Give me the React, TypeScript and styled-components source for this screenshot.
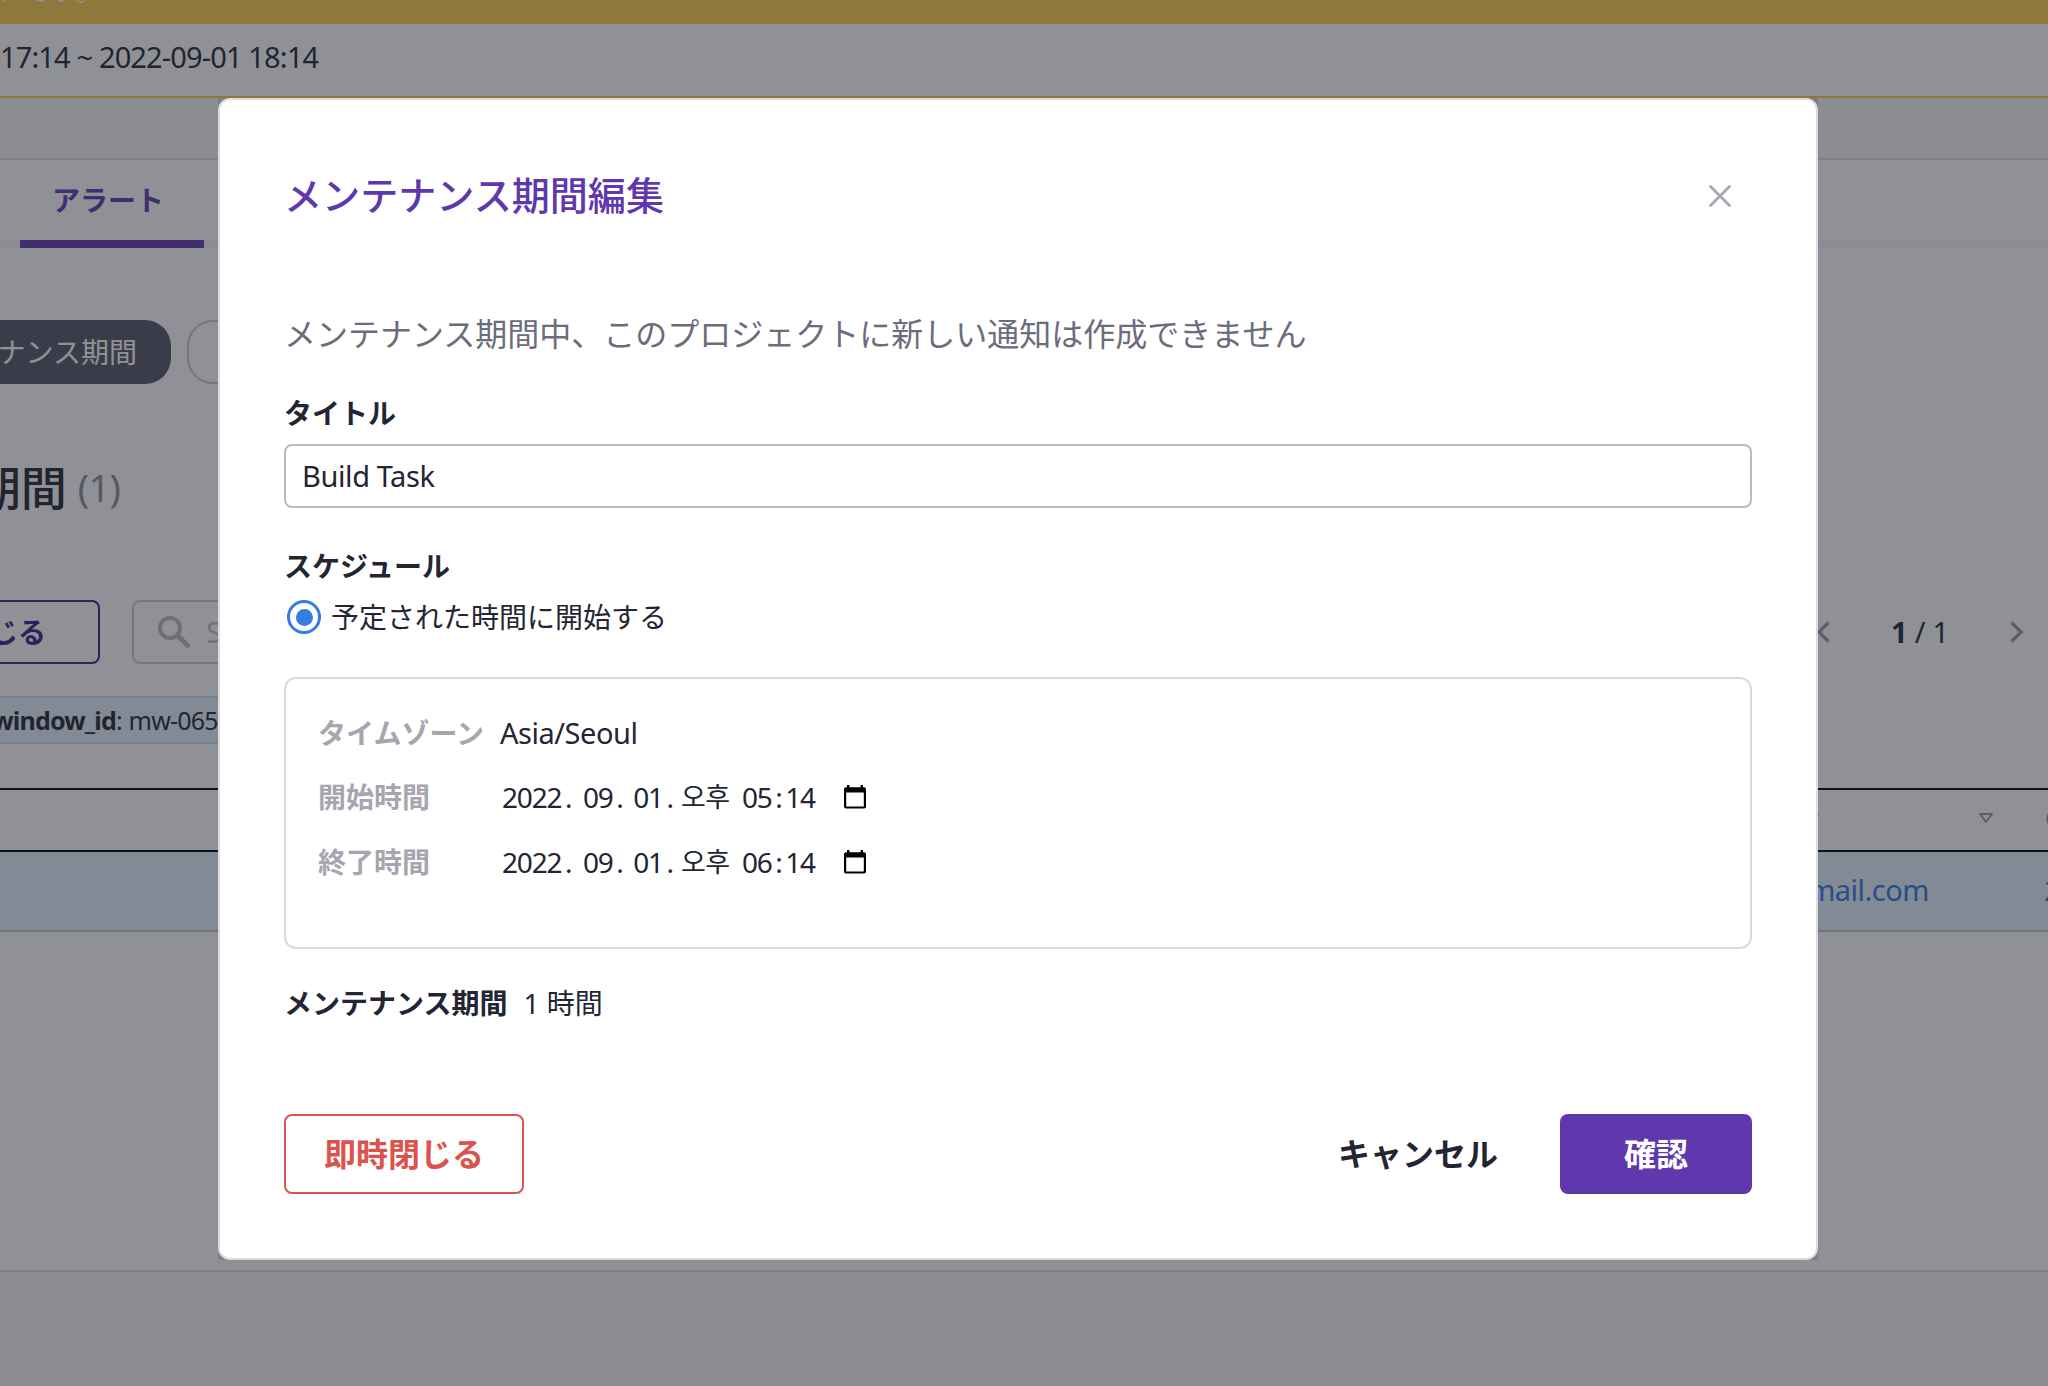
import React from "react";
import styled, { createGlobalStyle, css } from "styled-components";

const GlobalStyle = createGlobalStyle`
  *, *::before, *::after { box-sizing: border-box; }
  body {
    margin: 0;
    overflow: hidden;
    font-family: "Noto Sans", "Noto Sans CJK JP", "Noto Sans CJK KR", sans-serif;
    font-size: 28px;
    line-height: 40px;
    color: #232533;
  }
  button, input { font: inherit; color: inherit; }
`;

const Screen = styled.div`
  position: relative;
  width: 2048px;
  height: 1386px;
  overflow: hidden;
  background: #f7f7f8;
`;

const Page = styled.div`
  display: flex;
  flex-direction: column;
  height: 100%;
  white-space: nowrap;
`;

const Latin = styled.span`
  font-size: 29px;
  letter-spacing: -0.48px;
`;

const Banner = styled.div`
  display: flex;
  align-items: flex-end;
  height: 24px;
  padding-bottom: 14px;
  background: #f9cf49;
  color: #fff;
  overflow: hidden;
`;

const BannerText = styled.span`
  margin-left: -6px;
`;

const Notice = styled.div`
  display: flex;
  align-items: center;
  height: 74px;
  padding-bottom: 6px;
  background: #fff;
  border-bottom: 2px solid #f9cf49;
  font-size: 29px;
  letter-spacing: -0.86px;
`;

const Card = styled.main`
  display: flex;
  flex-direction: column;
  height: 1114px;
  margin-top: 60px;
  background: #fff;
  border-top: 2px solid #dcdce0;
  border-bottom: 2px solid #dcdce0;
`;

const Tabs = styled.nav`
  display: flex;
  height: 88px;
  padding-left: 20px;
  border-bottom: 8px solid #f5f5f8;
`;

const Tab = styled.a`
  display: flex;
  justify-content: center;
  width: 184px;
  height: 88px;
  padding: 20px 8px 0 0;
  border-bottom: 8px solid #6038ae;
  color: #6038ae;
  font-weight: 700;
`;

const Pills = styled.div`
  display: flex;
  gap: 16px;
  margin-top: 72px;
`;

const Pill = styled.span<{ $active?: boolean }>`
  display: flex;
  align-items: center;
  justify-content: flex-end;
  width: 171px;
  height: 64px;
  padding: 0 34px 0 0;
  border: 2px solid #c8c8ce;
  border-radius: 26px;
  overflow: hidden;
  ${(p) =>
    p.$active &&
    css`
      border: 0;
      border-radius: 0 26px 26px 0;
      background: #535566;
      color: #fff;
    `}
`;

const Heading = styled.h2`
  display: flex;
  align-items: center;
  justify-content: flex-end;
  gap: 11px;
  width: 120px;
  height: 60px;
  margin: 73px 0 0;
  font-size: 46px;
  font-weight: 500;
`;

const Count = styled.span`
  font-size: 38px;
  font-weight: 400;
  letter-spacing: -0.8px;
  color: #8b8c9c;
`;

const Toolbar = styled.div`
  display: flex;
  align-items: center;
  margin-top: 83px;
  height: 64px;
`;

const OutlineButton = styled.button`
  display: flex;
  align-items: center;
  justify-content: flex-end;
  width: 100px;
  height: 64px;
  padding: 0 52px 0 0;
  border: 2px solid #3e1c86;
  border-left: 0;
  border-radius: 0 8px 8px 0;
  background: transparent;
  color: #3e1c86;
  font-weight: 700;
  overflow: hidden;
`;

const Search = styled.div`
  display: flex;
  align-items: center;
  gap: 15px;
  width: 700px;
  height: 64px;
  margin-left: 32px;
  padding-left: 23px;
  border: 2px solid #c8c8ce;
  border-radius: 8px;
  color: #c0c0c6;
`;

const Pager = styled.div`
  display: flex;
  align-items: center;
  gap: 61px;
  margin-left: auto;
  padding-right: 24px;
`;

const PageNumber = styled.span`
  font-size: 29px;
  letter-spacing: -0.2px;
`;

const QueryTag = styled.div`
  display: flex;
  align-items: center;
  width: 460px;
  height: 48px;
  margin-top: 32px;
  background: #e3f1ff;
  border: solid #bfdfff;
  border-width: 2px 2px 2px 0;
  border-radius: 0 4px 4px 0;
  font-size: 25px;
  letter-spacing: -0.8px;
`;

const QueryKey = styled.b`
  display: flex;
  justify-content: flex-end;
  width: 116px;
`;

const QueryValue = styled.span`
  word-spacing: 1px;
`;

const TableHead = styled.div`
  display: flex;
  align-items: center;
  justify-content: flex-end;
  height: 64px;
  margin-top: 44px;
  padding-bottom: 4px;
  border: solid #000;
  border-width: 2px 0;
  font-size: 26px;
  color: #8b8c9c;
`;

const HeadCell = styled.span<{ $w: number }>`
  display: flex;
  justify-content: flex-end;
  width: ${(p) => p.$w}px;
`;

const LastHeadCell = styled.span`
  width: 3px;
  margin-left: 51px;
`;

const Row = styled.div`
  display: flex;
  justify-content: flex-end;
  align-items: center;
  height: 80px;
  padding-bottom: 2px;
  background: #e3f1ff;
  border-bottom: 2px solid #bcc2cf;
  color: #2f78df;
`;

const LastCell = styled.span`
  width: 4px;
  margin-left: 115px;
`;

const Backdrop = styled.div`
  position: absolute;
  inset: 0;
  display: flex;
  align-items: flex-start;
  padding: 98px 0 0 218px;
  background: rgba(34, 36, 46, 0.5);
`;

const DialogFrame = styled.div`
  background: rgba(34, 36, 46, 0.15);
`;

const Dialog = styled.section`
  display: flex;
  flex-direction: column;
  width: 1600px;
  height: 1162px;
  padding: 64px;
  background: #fff;
  border: 2px solid #dcdce0;
  border-radius: 12px;
`;

const DialogHeader = styled.header`
  display: flex;
  align-items: center;
  justify-content: space-between;
  height: 64px;
  padding-right: 20px;
`;

const Title = styled.h1`
  margin: 0;
  padding-bottom: 3px;
  font-size: 38.1px;
  font-weight: 500;
  line-height: 56px;
  color: #6038ae;
`;

const IconButton = styled.button`
  display: flex;
  padding: 0;
  border: 0;
  background: none;
`;

const Description = styled.p`
  margin: 82px 0 0;
  font-size: 32px;
  line-height: 48px;
  color: #6b6c7c;
`;

const FieldLabel = styled.label<{ $top: number }>`
  margin-top: ${(p) => p.$top}px;
  font-weight: 700;
`;

const TextInput = styled.input`
  width: 100%;
  height: 64px;
  margin-top: 11px;
  padding: 0 16px 1px;
  border: 2px solid #b9b9c1;
  border-radius: 8px;
  outline: 0;
  && {
    font-size: 29px;
    letter-spacing: -0.4px;
  }
`;

const RadioRow = styled.div`
  display: flex;
  align-items: center;
  gap: 10px;
  margin: 11px 0 0 3px;
`;

const Radio = styled.span`
  display: flex;
  align-items: center;
  justify-content: center;
  width: 34px;
  height: 34px;
  border: 3px solid #367de0;
  border-radius: 50%;

  &::after {
    content: "";
    width: 17px;
    height: 17px;
    border-radius: 50%;
    background: #367de0;
  }
`;

const ScheduleBox = styled.div`
  display: flex;
  flex-direction: column;
  gap: 24px;
  height: 272px;
  margin-top: 40px;
  padding: 34px 32px;
  border: 2px solid #dadadd;
  border-radius: 12px;
`;

const ScheduleRow = styled.div`
  display: grid;
  grid-template-columns: 182px auto;
  align-items: center;
  height: 40px;

  &:last-child {
    margin-top: 1px;
  }
`;

const ScheduleLabel = styled.span`
  font-weight: 700;
  color: #a6a6af;
`;

const DateTime = styled.span`
  display: flex;
  align-items: center;
  padding-left: 1px;
`;

const DatePart = styled.span`
  padding: 0 1px;
  letter-spacing: -1.15px;
`;

const Meridiem = styled.span`
  margin-right: 11.5px;
  font-size: 27px;
  letter-spacing: -0.6px;
`;

const Sep = styled.span<{ $r: number }>`
  padding: 0 ${(p) => p.$r}px 0 2.5px;
  letter-spacing: -1px;
`;

const CalendarSlot = styled.span`
  display: flex;
  margin-left: 27.5px;
  padding-bottom: 1px;
`;

const Duration = styled.div`
  display: flex;
  gap: 16px;
  margin-top: 34px;
`;

const DialogFooter = styled.footer`
  display: flex;
  align-items: center;
  margin-top: 91px;
`;

const DialogButton = styled.button<{ $kind: "danger" | "plain" | "primary" }>`
  height: 80px;
  padding: 0;
  border: 0;
  border-radius: 8px;
  background: transparent;
  && {
    font-size: 32px;
    font-weight: 700;
  }
  ${(p) => p.$kind === "danger" && css`width: 240px; border: 2px solid #da534c; color: #da534c !important;`}
  ${(p) => p.$kind === "plain" && css`width: 160px; margin: 0 62px 0 auto;`}
  ${(p) => p.$kind === "primary" && css`width: 192px; background: #6038ae; color: #fff !important;`}
`;

const Chevron = ({ flip }: { flip?: boolean }) => (
  <svg width="14" height="22" viewBox="0 0 14 22" fill="none" stroke="#9b9ba8" strokeWidth="3.4" strokeLinecap="round">
    <path d={flip ? "M2.5 2.5 11 11 2.5 19.5" : "M11.5 2.5 3 11 11.5 19.5"} />
  </svg>
);

const SearchIcon = () => (
  <svg width="34" height="34" viewBox="0 0 34 34" fill="none" stroke="#b8b8c0" strokeWidth="4">
    <circle cx="13" cy="13" r="10" />
    <path d="M20.5 20.5 32 32" strokeWidth="4.6" />
  </svg>
);

const CloseIcon = () => (
  <svg width="24" height="24" viewBox="0 0 24 24" fill="none" stroke="#a6a6af" strokeWidth="2.8" strokeLinecap="round">
    <path d="M2.5 2.5 21.5 21.5M21.5 2.5 2.5 21.5" />
  </svg>
);

const SortIcon = () => (
  <svg width="16" height="12" viewBox="0 0 16 12" fill="none" stroke="#9b9ba8" strokeWidth="2" strokeLinejoin="round">
    <path d="M2 2H14L8 10Z" />
  </svg>
);

const CalendarIcon = () => (
  <svg width="24" height="26" viewBox="0 0 24 26">
    <path
      fill="#000"
      fillRule="evenodd"
      d="M4 1H6.4V3.2H17.6V1H20V3.2H21Q23 3.2 23 5.2V22.5Q23 24.6 21 24.6H3Q1 24.6 1 22.5V5.2Q1 3.2 3 3.2H4ZM3.2 8.4V22.4H20.8V8.4Z"
    />
  </svg>
);

const DateField = ({ hour }: { hour: string }) => (
  <DateTime>
    <DatePart>2022</DatePart>
    <Sep $r={10.5}>.</Sep>
    <DatePart>09</DatePart>
    <Sep $r={9.5}>.</Sep>
    <DatePart>01</DatePart>
    <Sep $r={8}>.</Sep>
    <Meridiem lang="ko">오후</Meridiem>
    <DatePart>{hour}</DatePart>
    <Sep $r={2.5}>:</Sep>
    <DatePart>14</DatePart>
    <CalendarSlot>
      <CalendarIcon />
    </CalendarSlot>
  </DateTime>
);

export default function App() {
  return (
    <Screen>
      <GlobalStyle />
      <Page>
        <Banner>
          <BannerText>トです。</BannerText>
        </Banner>
        <Notice>17:14 ~ 2022-09-01 18:14</Notice>
        <Card>
          <Tabs>
            <Tab>アラート</Tab>
          </Tabs>
          <Pills>
            <Pill $active>ナンス期間</Pill>
            <Pill />
          </Pills>
          <Heading>
            期間 <Count>(1)</Count>
          </Heading>
          <Toolbar>
            <OutlineButton>じる</OutlineButton>
            <Search>
              <SearchIcon />
              <Latin>Search</Latin>
            </Search>
            <Pager>
              <Chevron />
              <PageNumber>
                <b>1</b> / 1
              </PageNumber>
              <Chevron flip />
            </Pager>
          </Toolbar>
          <QueryTag>
            <QueryKey>window_id</QueryKey>
            <QueryValue>: mw-0657</QueryValue>
          </QueryTag>
          <TableHead>
            <HeadCell $w={300}>User</HeadCell>
            <HeadCell $w={175}>
              <SortIcon />
            </HeadCell>
            <LastHeadCell>C</LastHeadCell>
          </TableHead>
          <Row>
            <Latin>gmail.com</Latin>
            <LastCell>2</LastCell>
          </Row>
        </Card>
      </Page>
      <Backdrop>
        <DialogFrame>
          <Dialog role="dialog">
            <DialogHeader>
              <Title>メンテナンス期間編集</Title>
              <IconButton aria-label="close">
                <CloseIcon />
              </IconButton>
            </DialogHeader>
            <Description>メンテナンス期間中、このプロジェクトに新しい通知は作成できません</Description>
            <FieldLabel $top={35}>タイトル</FieldLabel>
            <TextInput defaultValue="Build Task" />
            <FieldLabel $top={38}>スケジュール</FieldLabel>
            <RadioRow>
              <Radio />
              予定された時間に開始する
            </RadioRow>
            <ScheduleBox>
              <ScheduleRow>
                <ScheduleLabel>タイムゾーン</ScheduleLabel>
                <Latin>Asia/Seoul</Latin>
              </ScheduleRow>
              <ScheduleRow>
                <ScheduleLabel>開始時間</ScheduleLabel>
                <DateField hour="05" />
              </ScheduleRow>
              <ScheduleRow>
                <ScheduleLabel>終了時間</ScheduleLabel>
                <DateField hour="06" />
              </ScheduleRow>
            </ScheduleBox>
            <Duration>
              <b>メンテナンス期間</b>
              <span>1 時間</span>
            </Duration>
            <DialogFooter>
              <DialogButton $kind="danger">即時閉じる</DialogButton>
              <DialogButton $kind="plain">キャンセル</DialogButton>
              <DialogButton $kind="primary">確認</DialogButton>
            </DialogFooter>
          </Dialog>
        </DialogFrame>
      </Backdrop>
    </Screen>
  );
}
